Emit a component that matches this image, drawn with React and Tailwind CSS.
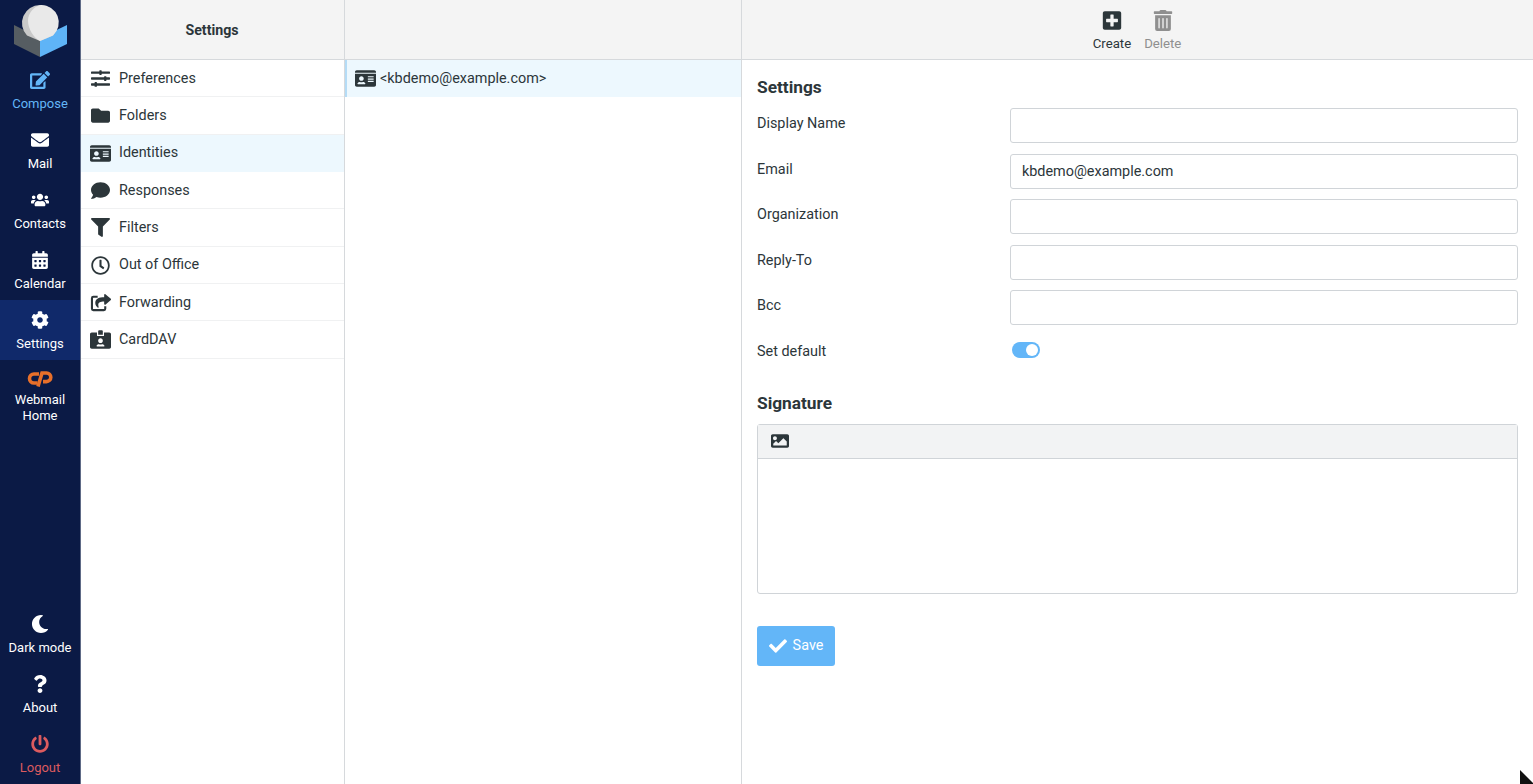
import React from "react";
import {
  FaEdit,
  FaEnvelope,
  FaUsers,
  FaCalendarAlt,
  FaCog,
  FaMoon,
  FaQuestion,
  FaPowerOff,
  FaSlidersH,
  FaFolder,
  FaIdCard,
  FaComment,
  FaFilter,
  FaRegClock,
  FaIdCardAlt,
  FaPlusSquare,
  FaTrashAlt,
  FaImage,
  FaCheck,
} from "react-icons/fa";

function Logo() {
  return (
    <svg viewBox="0 0 80 60" className="w-20 h-[60px] block">
      <polygon points="14,25 40,38 40,57 14,44" fill="#565d62" />
      <polygon points="40,38 67,25 67,44 40,57" fill="#5fb4f7" />
      <path d="M40 5a18 18 0 0 1 13 30.500l-13 5.500-13-5.500a18 18 0 0 1 13-30.500z" fill="#c9c9c9" />
      <path d="M41 5a17.500 17.500 0 0 1 12 30.500l-13 5.500c-6-3-12-12-12-20 0-8 6-15 13-16z" fill="#e9e9e9" />
    </svg>
  );
}

function CpanelLogo() {
  return (
    <svg viewBox="0 0 26 17" className="w-[26px] h-[17px] block mb-[5px]" fill="none" stroke="#e8702a" strokeWidth="3.6">
      <path d="M12 4H7a4.500 4.500 0 0 0 0 9h3.500" />
      <path d="M11 16.500L15 3h4.500a4.300 4.300 0 0 1 0 8.600H16" />
    </svg>
  );
}

// solid arrow over an open box, the react-icons version is outlined all the way
function ForwardIcon() {
  return (
    <svg viewBox="0 0 22 20" className="w-[21px] h-[19px] block" fill="none">
      <path d="M8 4H3.500A1.500 1.500 0 0 0 2 5.500v11A1.500 1.500 0 0 0 3.500 18h11a1.500 1.500 0 0 0 1.500-1.500V14" stroke="currentColor" strokeWidth="2.200" />
      <g transform="translate(5.500 0) scale(0.0325)" fill="currentColor">
        <path d="M503.691 189.836L327.687 37.851C312.281 24.546 288 35.347 288 56.015v80.053C127.371 137.907 0 170.1 0 322.326c0 61.441 39.581 122.309 83.333 154.132 13.653 9.931 33.111-2.533 28.077-18.631C66.066 312.814 132.917 274.316 288 272.085V360c0 20.7 24.3 31.453 39.687 18.164l176.004-152c11.071-9.562 11.086-26.753 0-36.328z" />
      </g>
    </svg>
  );
}

function NavItem({ icon, label, className = "text-white" }) {
  return (
    <a className={`flex flex-col items-center h-[60px] pt-[9px] text-[13px] leading-4 ${className}`}>
      <span className="h-[22px] text-[18px] flex items-center">{icon}</span>
      <span className="mt-[5px]">{label}</span>
    </a>
  );
}

const settingsItems = [
  { label: "Preferences", icon: <FaSlidersH /> },
  { label: "Folders", icon: <FaFolder /> },
  { label: "Identities", icon: <FaIdCard className="text-[21px]" />, selected: true },
  { label: "Responses", icon: <FaComment /> },
  { label: "Filters", icon: <FaFilter /> },
  { label: "Out of Office", icon: <FaRegClock /> },
  { label: "Forwarding", icon: <ForwardIcon /> },
  { label: "CardDAV", icon: <FaIdCardAlt className="text-[21px]" /> },
];

function FormRow({ label, value = "" }) {
  return (
    <div className="flex h-[45.5px]">
      <label className="w-[253px] pt-[6.4px] leading-[22px]">{label}</label>
      <input
        readOnly
        value={value}
        className="w-[508px] h-[35px] mt-[1px] px-[11px] border border-[#d0d4d8] rounded-[3px] bg-white text-[#2c363a] outline-none"
      />
    </div>
  );
}

export default function App() {
  return (
    <div className="relative flex w-full h-[784px] overflow-hidden bg-white text-[14.4px] text-[#2c363a] font-['Roboto',sans-serif]">
      {/* main menu */}
      <div className="w-[81px] shrink-0 flex flex-col bg-[#0b1a45] border-r border-[#5e6a86]">
        <Logo />
        <NavItem icon={<FaEdit className="text-[20px]" />} label="Compose" className="text-[#63b6f8]" />
        <NavItem icon={<FaEnvelope />} label="Mail" />
        <NavItem icon={<FaUsers />} label="Contacts" />
        <NavItem icon={<FaCalendarAlt />} label="Calendar" />
        <NavItem icon={<FaCog />} label="Settings" className="text-white bg-[#10296a]" />
        <a className="flex flex-col items-center pt-[10px] text-[13px] leading-4 text-white">
          <CpanelLogo />
          <span className="text-center">
            Webmail
            <br />
            Home
          </span>
        </a>
        <div className="mt-auto">
          <NavItem icon={<FaMoon />} label="Dark mode" />
          <NavItem icon={<FaQuestion />} label="About" />
          <NavItem icon={<FaPowerOff />} label="Logout" className="text-[#dc5b5f]" />
        </div>
      </div>

      {/* settings sections */}
      <div className="w-[264px] shrink-0 flex flex-col border-r border-[#d6d9dc]">
        <div className="h-[60px] shrink-0 flex items-center justify-center pt-[3px] pr-[1px] bg-[#f4f4f4] border-b border-[#d6d9dc] font-bold text-[14.2px]">
          Settings
        </div>
        {settingsItems.map((item) => (
          <div
            key={item.label}
            className={`flex items-center h-[37.33px] pt-[0.5px] border-b ${item.selected ? "bg-[#edf8fe] border-[#edf8fe]" : "border-[#f0f1f2]"}`}
          >
            <span className="w-[38px] flex justify-center text-[19px] text-[#2c363a]">{item.icon}</span>
            <span>{item.label}</span>
          </div>
        ))}
      </div>

      {/* identities list */}
      <div className="w-[397px] shrink-0 flex flex-col bg-white border-r border-[#d6d9dc]">
        <div className="h-[60px] shrink-0 bg-[#f4f4f4] border-b border-[#d6d9dc]" />
        <div className="flex items-center h-[37px] bg-[#edf8fe] border-l-2 border-[#b5dcf6] pl-[8px]">
          <FaIdCard className="text-[21px] mr-[4px]" />
          <span>&lt;kbdemo@example.com&gt;</span>
        </div>
      </div>

      {/* identity form */}
      <div className="flex-1 flex flex-col">
        <div className="h-[60px] shrink-0 flex justify-center gap-[13px] bg-[#f4f4f4] border-b border-[#d6d9dc] pr-[1px] text-[13.2px] leading-4">
          <a className="flex flex-col items-center pt-[10px]">
            <FaPlusSquare className="text-[20px] h-[21px]" />
            <span className="mt-[5px]">Create</span>
          </a>
          <a className="flex flex-col items-center pt-[10px] text-[#8f8f8f]">
            <FaTrashAlt className="text-[20px] h-[21px]" />
            <span className="mt-[5px]">Delete</span>
          </a>
        </div>

        <div className="px-[15px] pt-[16px]">
          <h2 className="text-[17.3px] font-bold leading-[22px] mb-[9px]">Settings</h2>
          <FormRow label="Display Name" />
          <FormRow label="Email" value="kbdemo@example.com" />
          <FormRow label="Organization" />
          <FormRow label="Reply-To" />
          <FormRow label="Bcc" />
          <div className="flex items-center h-[24px] mt-[5px]">
            <span className="w-[255px]">Set default</span>
            <span className="w-[28px] h-[16px] mb-[3px] rounded-full bg-[#63b6f8] flex items-center justify-end pr-[2px]">
              <span className="w-[12px] h-[12px] rounded-full bg-white" />
            </span>
          </div>

          <h2 className="text-[17.3px] font-bold leading-[22px] mt-[28px] mb-[10px]">Signature</h2>
          <div className="w-[761px] h-[170px] flex flex-col border border-[#d0d4d8] rounded-[3px]">
            <div className="h-[34px] shrink-0 flex items-center pl-[13px] bg-[#f2f3f4] border-b border-[#d0d4d8] text-[18px]">
              <FaImage />
            </div>
          </div>

          <button className="mt-[32px] w-[78px] h-[40px] flex items-center justify-center gap-[6px] rounded-[3px] bg-[#63b6f8] text-white">
            <FaCheck className="text-[18px] mt-[1px]" />
            <span>Save</span>
          </button>
        </div>
      </div>

      {/* mouse pointer caught in the screenshot */}
      <svg viewBox="0 0 14 15" className="absolute left-[1519px] top-[769px] w-[14px] h-[15px]">
        <polygon points="1,1 14,14 14,15 1,15" fill="#111" />
      </svg>
    </div>
  );
}
